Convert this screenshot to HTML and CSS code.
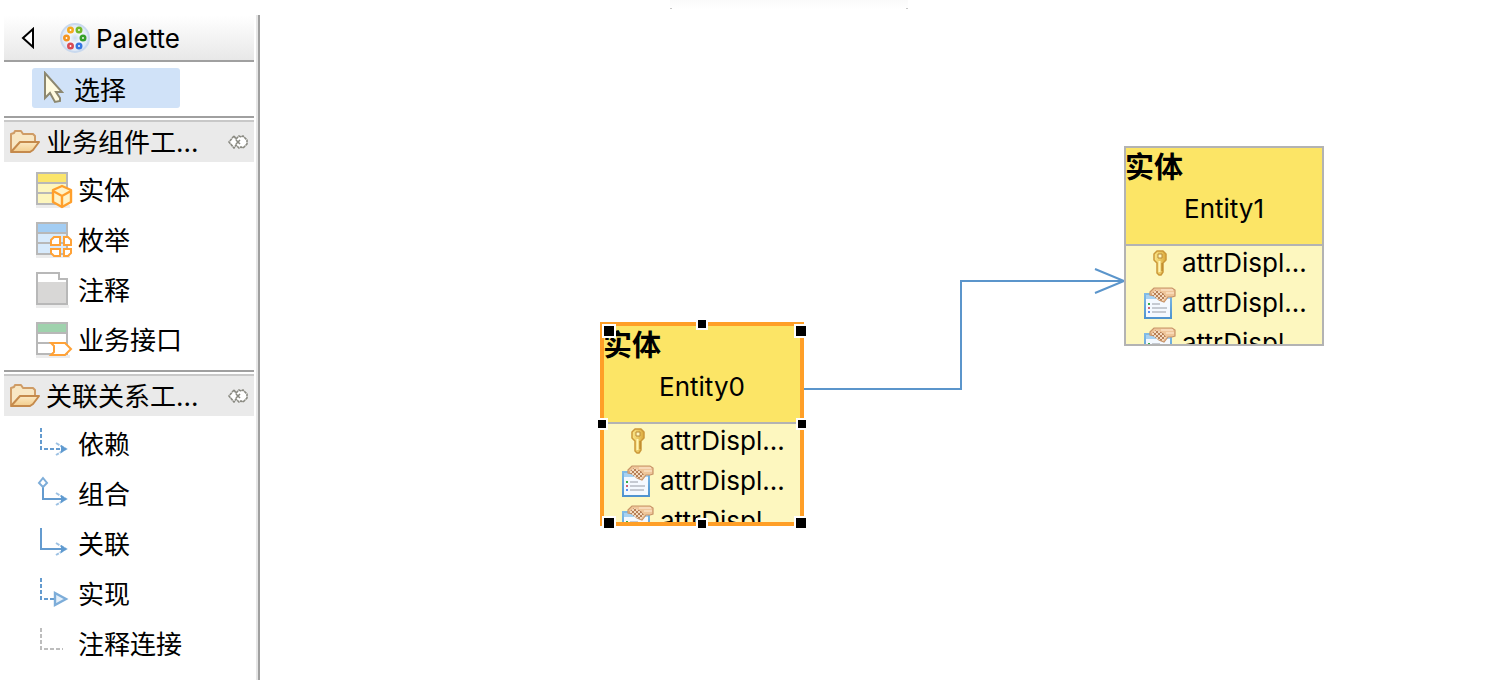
FILE: index.html
```html
<!DOCTYPE html>
<html lang="zh-CN">
<head>
<meta charset="utf-8">
<title>Palette</title>
<link rel="stylesheet" href="styles.css">
</head>
<body>
<svg class="defs" aria-hidden="true">
  <defs>
    <linearGradient id="folderFill" x1="0" y1="0" x2="0" y2="1"><stop offset="0" stop-color="#fbe9c4"/><stop offset="1" stop-color="#f3cd8c"/></linearGradient>
    <linearGradient id="keyFill" x1="0" y1="0" x2="1" y2="0"><stop offset="0" stop-color="#fbe88c"/><stop offset="1" stop-color="#dba93a"/></linearGradient>
    <linearGradient id="frameFill" x1="0" y1="0" x2="0" y2="1"><stop offset="0" stop-color="#7fbbe6"/><stop offset="1" stop-color="#4f93cf"/></linearGradient>
    <radialGradient id="discFill"><stop offset="0" stop-color="#c9dcf0"/><stop offset=".4" stop-color="#f4f8fd"/><stop offset="1" stop-color="#dbe6f5"/></radialGradient>
    <pattern id="weave" width="4" height="4" patternUnits="userSpaceOnUse"><rect width="4" height="4" fill="#f4dcc2"/><path d="M0 0h2v2H0zM2 2h2v2H2z" fill="#b67f56"/></pattern>
  </defs>
  <symbol id="folder" viewBox="0 0 32 26">
    <path d="M3 22V5l3-1 1-2h6l2 3h10l2 2v5" fill="#f8e7c4" stroke="#cf9c66" stroke-width="2" stroke-linejoin="round"/>
    <path d="M3 23 12 13h19l-6 8-3 2z" fill="url(#folderFill)" stroke="#c58a4c" stroke-width="2" stroke-linejoin="round"/>
  </symbol>
  <symbol id="pin" viewBox="0 0 20 14">
    <path d="M6 1 1 7l5 6 2-3 3 3 2-1 2 1 4-4V5l-4-4-2 1-2-1-3 3z" fill="#fff" stroke="#8a8a82" stroke-width="1.600" stroke-dasharray="3 .5"/>
    <path d="m8 5 4 4M12 5 8 9" stroke="#8a8a82" stroke-width="1.600"/>
  </symbol>
  <symbol id="key" viewBox="0 0 16 26">
    <path d="M5 1h6l3 3v6l-3 3v9l-2 3H7l-2-2V13l-3-3V4z" fill="url(#keyFill)" stroke="#cb9838" stroke-width="1.500" stroke-linejoin="round"/>
    <path d="M6 4h4v4H6z" fill="#fdf7bf" stroke="#b98a36"/><path d="M7.500 11v11" stroke="#fff6b8" stroke-width="2"/><path d="M10 13v8" stroke="#b07c22"/>
  </symbol>
  <symbol id="attr" viewBox="0 0 32 32">
    <path d="M1 7h26v24H1z" fill="#f4f9ff" stroke="url(#frameFill)" stroke-width="2"/>
    <path d="M2 8h24v4H2z" fill="#a7d1f1"/>
    <path d="M4 16h2v2H4z" fill="#35ad46"/><path d="M4 20h2v2H4z" fill="#ce6273"/><path d="M4 24h2v2H4z" fill="#5c91ef"/>
    <path d="M8 17h8M8 21h15M8 25h14" stroke="#b5bbc3" stroke-width="1.400"/>
    <path d="m6 5 4-4h18l3 2v6l-3 1h-4l-4 5-5-2-4-4-5-1z" fill="#efc69a" stroke="#c89468" stroke-width="1.200"/>
    <path d="m7 7 5-4 7 3 3 4-3 4-6-2z" fill="url(#weave)"/>
    <path d="M17 3h12M22 6h8" stroke="#fbe1c2" stroke-width="1.400"/>
  </symbol>
  <symbol id="head" viewBox="0 0 14 16">
    <path d="m2 2 10 6-10 6" fill="none" stroke="#9cc1e3" stroke-width="2" stroke-dasharray="4 1"/>
    <path d="m7 4 6 4-6 4z" fill="#5f9ad0"/>
  </symbol>
</svg>
<div class="editor">
  <aside class="palette">
    <header class="palette-head">
      <button class="collapse" aria-label="收起"><svg width="14" height="22" viewBox="0 0 14 22"><path d="M12 2v18L2 11z" fill="#fff" stroke="#000" stroke-width="2"/></svg></button>
      <svg class="palette-icon" width="32" height="32" viewBox="0 0 32 32">
        <circle cx="16" cy="16" r="14" fill="url(#discFill)" stroke="#c9d9ee" stroke-width="2"/>
        <g fill="#fff" stroke-width="2.600"><circle cx="11.500" cy="8" r="2.200" stroke="#f5a920"/><circle cx="20" cy="8" r="2.200" stroke="#73b929"/><circle cx="7.500" cy="16" r="2.200" stroke="#f49521"/><circle cx="24" cy="16" r="2.200" stroke="#35a02b"/><circle cx="11.500" cy="24" r="2.200" stroke="#d94b55"/><circle cx="20" cy="24" r="2.200" stroke="#3678e2"/></g>
      </svg>
      <h1>Palette</h1>
    </header>
    <div class="select-row">
      <button class="select-tool">
        <svg width="22" height="34" viewBox="0 0 22 34"><path d="M3 2v25l5-5 5 9 5-1v-3l-4-6h6z" fill="#fffbe0" stroke="#8d8870" stroke-width="2"/></svg>
        <span>选择</span>
      </button>
    </div>
    <section class="drawer">
      <button class="drawer-head"><svg width="32" height="26"><use href="#folder"/></svg><span>业务组件工...</span><svg width="20" height="14"><use href="#pin"/></svg></button>
      <div class="tools">
        <button class="tool"><svg width="38" height="38" viewBox="0 0 38 38">
          <path d="M0 34h34v3H0z" fill="#ececec"/><path d="M1 2h30v31H1z" fill="#fdf6bd" stroke="#b8b8b8" stroke-width="2"/><path d="M2 3h28v8H2z" fill="#fbe56b"/><path d="M1 12h30M1 22h30" stroke="#b8b8b8" stroke-width="2"/>
          <path d="m26 15 9 4v12l-9 5-9-5V19z" fill="#fff3c8" stroke="#ff9f2b" stroke-width="2.400" stroke-linejoin="round"/><path d="m17 20 9 5 9-5M26 25v10" fill="none" stroke="#ff9f2b" stroke-width="2.400"/></svg><span>实体</span></button>
        <button class="tool"><svg width="38" height="38" viewBox="0 0 38 38">
          <path d="M0 34h34v3H0z" fill="#ececec"/><path d="M1 2h30v31H1z" fill="#d7eafc" stroke="#b8b8b8" stroke-width="2"/><path d="M2 3h28v8H2z" fill="#a3cdf3"/><path d="M1 12h30M1 22h30" stroke="#b8b8b8" stroke-width="2"/>
          <path d="M18 16h6v8h-9v-5zM28 16h4l3 3v5h-7zM15 28h9v7h-6l-3-3zM28 28h7v4l-3 3h-4z" fill="#fff" stroke="#ffa237" stroke-width="2"/></svg><span>枚举</span></button>
        <button class="tool"><svg width="38" height="38" viewBox="0 0 38 38">
          <path d="M0 34h33v3H0z" fill="#ececec"/><path d="M1 2h22v6h8v25H1z" fill="#fff" stroke="#b8b8b8" stroke-width="2"/><path d="M2 11h28v21H2z" fill="#d8d7d6"/></svg><span>注释</span></button>
        <button class="tool"><svg width="38" height="38" viewBox="0 0 38 38">
          <path d="M0 34h34v3H0z" fill="#ececec"/><path d="M1 2h30v31H1z" fill="#fff" stroke="#b8b8b8" stroke-width="2"/><path d="M2 3h28v8H2z" fill="#9fd2ad"/><path d="M1 12h30M1 22h30" stroke="#b8b8b8" stroke-width="2"/>
          <path d="M15 22h14l6 6-6 6H15l3-3v-6z" fill="#fff" stroke="#ffa237" stroke-width="2"/></svg><span>业务接口</span></button>
      </div>
    </section>
    <section class="drawer">
      <button class="drawer-head"><svg width="32" height="26"><use href="#folder"/></svg><span>关联关系工...</span><svg width="20" height="14"><use href="#pin"/></svg></button>
      <div class="tools">
        <button class="tool"><svg width="38" height="38" viewBox="0 0 38 38" fill="none" stroke="#649bcf" stroke-width="2">
          <path d="M5 3v21h20" stroke-dasharray="4 2"/><use href="#head" x="18" y="16" width="14" height="16" stroke="none"/></svg><span>依赖</span></button>
        <button class="tool"><svg width="38" height="38" viewBox="0 0 38 38" fill="none" stroke="#649bcf" stroke-width="2">
          <path d="M7 12v12h20"/><path d="m7 3 4 5-4 4-4-4z" fill="#fff" stroke="#7dadd9"/><use href="#head" x="18" y="16" width="14" height="16" stroke="none"/></svg><span>组合</span></button>
        <button class="tool"><svg width="38" height="38" viewBox="0 0 38 38" fill="none" stroke="#649bcf" stroke-width="2">
          <path d="M5 3v21h22"/><use href="#head" x="18" y="16" width="14" height="16" stroke="none"/></svg><span>关联</span></button>
        <button class="tool"><svg width="38" height="38" viewBox="0 0 38 38" fill="none" stroke="#649bcf" stroke-width="2">
          <path d="M5 3v21h14" stroke-dasharray="4 2"/><path d="m19 18 11 6-11 6z" fill="#e5f0fa" stroke="#7dadd9" stroke-width="2.400"/></svg><span>实现</span></button>
        <button class="tool"><svg width="38" height="38" viewBox="0 0 38 38" fill="none" stroke="#bdbdbd" stroke-width="2">
          <path d="M5 3v21h22" stroke-dasharray="4 2"/></svg><span>注释连接</span></button>
      </div>
    </section>
  </aside>
  <main class="canvas">
    <div class="top-tab"></div>
    <svg class="links" width="1064" height="420" viewBox="0 0 1064 420"><path d="M544 389h157V281h163M835 269l29 12-29 12" fill="none" stroke="#5b95cb" stroke-width="2"/></svg>
    <article class="node selected">
      <div class="node-head"><h2>实体</h2><p>Entity0</p></div>
      <ul>
        <li><svg class="key" width="16" height="26"><use href="#key"/></svg>attrDispl...</li>
        <li><svg width="32" height="32"><use href="#attr"/></svg>attrDispl...</li>
        <li><svg width="32" height="32"><use href="#attr"/></svg>attrDispl</li>
      </ul>
    </article>
    <svg class="handles" width="216" height="216" viewBox="0 0 216 216" fill="#000" stroke="#fff" stroke-width="2">
      <path d="M9 11h12v12H9zM201 11h12v12h-12zM9 203h12v12H9zM201 203h12v12h-12zM103 5h10v10h-10zM3 105h10v10H3zM203 105h10v10h-10zM103 205h10v10h-10z"/>
    </svg>
    <article class="node target">
      <div class="node-head"><h2>实体</h2><p>Entity1</p></div>
      <ul>
        <li><svg class="key" width="16" height="26"><use href="#key"/></svg>attrDispl...</li>
        <li><svg width="32" height="32"><use href="#attr"/></svg>attrDispl...</li>
        <li><svg width="32" height="32"><use href="#attr"/></svg>attrDispl</li>
      </ul>
    </article>
  </main>
</div>
</body>
</html>
```
FILE: styles.css
```css
* { box-sizing: border-box; }
body {
  margin: 0;
  background: #fff;
  color: #000;
  font: 26px/40px Inter, "Noto Sans CJK SC", sans-serif;
}
h1, h2, p, ul { margin: 0; padding: 0; font-size: inherit; font-weight: 400; }
button { border: 0; padding: 0; background: none; color: inherit; font: inherit; text-align: left; }
svg { flex: none; }
.defs { position: absolute; width: 0; height: 0; }
.editor { display: flex; min-height: 100vh; overflow: hidden; }

.palette {
  flex: none;
  width: 260px;
  margin-top: 15px;
  padding: 0 2px 0 4px;
  border-right: 2px solid #a0a0a0;
  box-shadow: inset -2px 0 #e6e6e6;
}
.palette-head, .select-row, .drawer { width: 250px; }
.palette-head {
  display: flex;
  align-items: center;
  height: 47px;
  padding-left: 17px;
  border-bottom: 2px solid #a0a0a0;
  background: linear-gradient(#fff, #e8e8e8);
}
.palette-head h1 { padding-top: 2px; }
.collapse { display: flex; }
.palette-icon { margin: 0 5px 0 24px; }
.select-row { padding: 6px 28px 8px; }
.select-tool {
  display: flex;
  align-items: center;
  gap: 10px;
  width: 148px;
  height: 40px;
  padding-left: 10px;
  border-radius: 3px;
  background: #d0e2f8;
}
.select-tool span { padding-top: 6px; }
.drawer { border-top: 2px solid #a0a0a0; padding-top: 2px; }
.drawer-head {
  display: flex;
  align-items: center;
  gap: 6px;
  width: 100%;
  height: 42px;
  padding: 0 6px 0 4px;
  border-top: 2px solid #c8c8c8;
  background: #eaeaea;
}
.drawer-head span { flex: 1; padding-top: 2px; }
.tools { padding: 3px 0 5px 32px; }
.tool { display: flex; align-items: center; gap: 4px; width: 100%; height: 50px; }
.tool span { padding-top: 2px; }

.canvas { position: relative; flex: 1; overflow: hidden; }
.top-tab {
  position: absolute;
  top: 0;
  left: 410px;
  width: 238px;
  height: 9px;
  background: linear-gradient(#fafafa, #fff);
  border: solid #c4c4c4;
  border-width: 0 2px;
  border-image: linear-gradient(transparent 8px, #c4c4c4 8px) 0 2;
}
.links { position: absolute; top: 0; left: 0; }
.node {
  position: absolute;
  width: 200px;
  height: 200px;
  overflow: hidden;
  border: 2px solid #b3b3b3;
  background: #fdf7bf;
}
.selected { top: 324px; left: 342px; border-color: #ff9f27; box-shadow: 0 0 0 2px #ff9f27; }
.target { top: 146px; left: 864px; }
.node-head { height: 98px; border-bottom: 2px solid #b3b3b3; background: #fce566; }
.node h2 { margin-left: -1px; font-size: 29px; font-weight: 700; line-height: 40px; }
.node p { text-align: center; line-height: 42px; }
.node ul { list-style: none; padding-left: 18px; margin-top: -3px; }
.node li { display: flex; align-items: center; gap: 6px; height: 40px; white-space: nowrap; }
.key { margin: 0 8px; }
.handles { position: absolute; top: 314px; left: 334px; }
```
